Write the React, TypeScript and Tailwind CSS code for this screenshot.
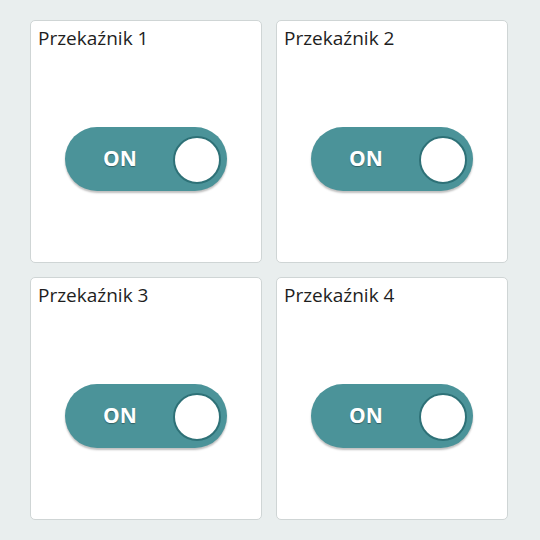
import { useState } from 'react';

type Przekaznik = {
  id: number;
  nazwa: string;
};

const przekazniki: Przekaznik[] = [
  { id: 1, nazwa: 'Przekaźnik 1' },
  { id: 2, nazwa: 'Przekaźnik 2' },
  { id: 3, nazwa: 'Przekaźnik 3' },
  { id: 4, nazwa: 'Przekaźnik 4' },
];

function Przelacznik({ wlaczony, onClick }: { wlaczony: boolean; onClick: () => void }) {
  return (
    <button
      onClick={onClick}
      className="relative flex h-[64px] w-[162px] items-center rounded-full bg-[#4b9399] shadow-[0_2px_2px_rgba(0,0,0,0.25)]"
    >
      <span className="w-[110px] text-center text-[21px] font-bold text-white [text-shadow:0_1px_1px_rgba(0,0,0,0.35)]">
        {wlaczony ? 'ON' : 'OFF'}
      </span>
      <span className="absolute right-[6px] top-[9px] h-[48px] w-[48px] rounded-full border-2 border-[#2e7177] bg-white" />
    </button>
  );
}

export default function App() {
  const [stany, setStany] = useState<Record<number, boolean>>({ 1: true, 2: true, 3: true, 4: true });

  return (
    <main className="min-h-screen bg-[#e9eeee] pl-[30px] pr-[32px] pt-[20px] pb-[20px] font-['Open_Sans',sans-serif]">
      <div className="grid grid-cols-2 gap-[14px]">
        {przekazniki.map((p) => (
          <div
            key={p.id}
            className="flex h-[243px] flex-col rounded-[5px] border border-[#cfd5d5] bg-white"
          >
            <p className="px-[7px] pt-[3px] text-[19px] leading-[28px] text-[#1e1e1e]">{p.nazwa}</p>
            <div className="flex flex-1 items-center justify-center pt-[4px]">
              <Przelacznik
                wlaczony={stany[p.id]}
                onClick={() => setStany((s) => ({ ...s, [p.id]: !s[p.id] }))}
              />
            </div>
          </div>
        ))}
      </div>
    </main>
  );
}
